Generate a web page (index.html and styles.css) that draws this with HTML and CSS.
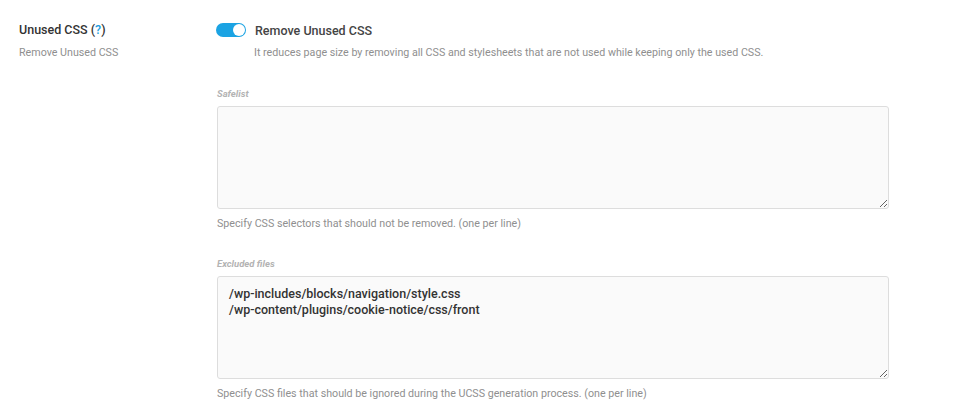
FILE: index.html
```html
<!DOCTYPE html>
<html>
<head>
<meta charset="utf-8">
<link rel="stylesheet" href="styles.css">
</head>
<body>
<div class="row">
  <div class="side">
    <div class="title">Unused CSS (<span class="q">?</span>)</div>
    <div class="sub">Remove Unused CSS</div>
  </div>
  <div class="main">
    <div class="toggle-line">
      <span class="toggle"><span class="knob"></span></span>
      <span class="tlabel">Remove Unused CSS</span>
    </div>
    <div class="desc">It reduces page size by removing all CSS and stylesheets that are not used while keeping only the used CSS.</div>

    <div class="field first">
      <div class="flabel">Safelist</div>
      <textarea class="ta"></textarea>
      <div class="help">Specify CSS selectors that should not be removed. (one per line)</div>
    </div>

    <div class="field">
      <div class="flabel">Excluded files</div>
      <textarea class="ta">/wp-includes/blocks/navigation/style.css
/wp-content/plugins/cookie-notice/css/front</textarea>
      <div class="help">Specify CSS files that should be ignored during the UCSS generation process. (one per line)</div>
    </div>
  </div>
</div>
</body>
</html>
```

FILE: styles.css
```css
html, body {
  margin: 0;
  padding: 0;
  background: #ffffff;
  font-family: Roboto, "Liberation Sans", Arial, sans-serif;
}
.row {
  display: flex;
  padding: 21px 0 0 19px;
}
.side {
  width: 197px;
  flex: none;
}
.title {
  font-size: 12.5px;
  font-weight: 500;
  color: #333333;
  line-height: 18px;
}
.q {
  color: #1e9fe0;
}
.sub {
  margin-top: 7px;
  font-size: 10.7px;
  color: #8f8f8f;
  line-height: 14px;
}
.main {
  width: 672px;
  flex: none;
}
.toggle-line {
  display: flex;
  align-items: center;
  height: 18px;
}
.toggle {
  width: 30px;
  height: 14px;
  border-radius: 7px;
  background: #1ba3e3;
  position: relative;
  flex: none;
}
.knob {
  position: absolute;
  right: 1px;
  top: 1px;
  width: 12px;
  height: 12px;
  border-radius: 50%;
  background: #ffffff;
}
.tlabel {
  margin-left: 9px;
  font-size: 12.5px;
  font-weight: 500;
  color: #444444;
}
.desc {
  margin: 7px 0 0 38px;
  font-size: 10.7px;
  color: #8f8f8f;
  line-height: 14px;
}
.field {
  margin-top: 27px;
  padding-left: 1px;
}
.field.first {
  margin-top: 28px;
}
.flabel {
  font-size: 9.5px;
  font-style: italic;
  font-weight: 700;
  color: #b3b3b3;
  line-height: 12px;
}
.ta {
  display: block;
  box-sizing: border-box;
  width: 672px;
  height: 103px;
  margin-top: 6px;
  background: #fafafa;
  border: 1px solid #dddddd;
  border-radius: 3px;
  padding: 9px 11px;
  font-family: Roboto, "Liberation Sans", Arial, sans-serif;
  font-size: 12.5px;
  font-weight: 500;
  line-height: 16px;
  color: #333333;
  resize: vertical;
  outline: none;
}
.help {
  margin-top: 8px;
  font-size: 10.7px;
  color: #8f8f8f;
  line-height: 14px;
}
```
